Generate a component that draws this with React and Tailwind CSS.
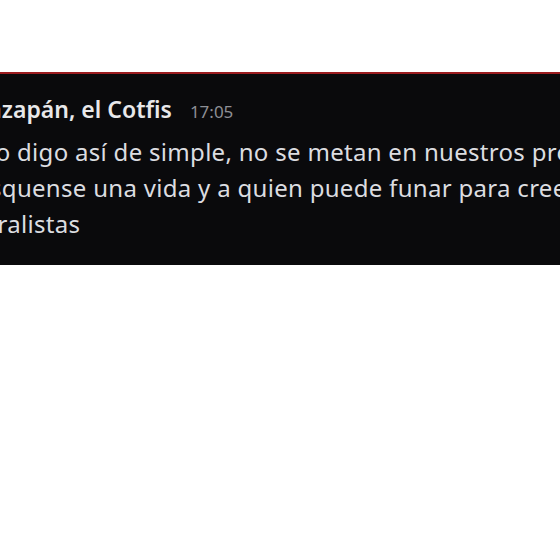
export default function App() {
    return (
        <div className="w-[560px] h-[560px] bg-white overflow-hidden" style={{ fontFamily: '"Noto Sans", "Open Sans", sans-serif' }}>
            <div className="h-[72px]" />
            {/* Message card */}
            <div className="h-[193px] bg-[#0a0a0c] border-t-2 border-[#9b1c1f] overflow-hidden pt-[19px]">
                <div className="flex items-baseline gap-[18px] whitespace-nowrap">
                    <span className="ml-[-33px] text-[23px] font-semibold text-[#e8e8ea] leading-8">Mazapán, el Cotfis</span>
                    <span className="text-[17px] text-[#8e8f95]">17:05</span>
                </div>
                <div className="mt-[9px] text-[24px] tracking-[0.3px] leading-[36px] text-[#dcdde0] whitespace-nowrap">
                    <div className="ml-[-17px]">Yo digo así de simple, no se metan en nuestros problemas</div>
                    <div className="ml-[-41px]">Búsquense una vida y a quien puede funar para creerse</div>
                    <div className="ml-[-40px]">moralistas</div>
                </div>
            </div>
        </div>
    );
}
